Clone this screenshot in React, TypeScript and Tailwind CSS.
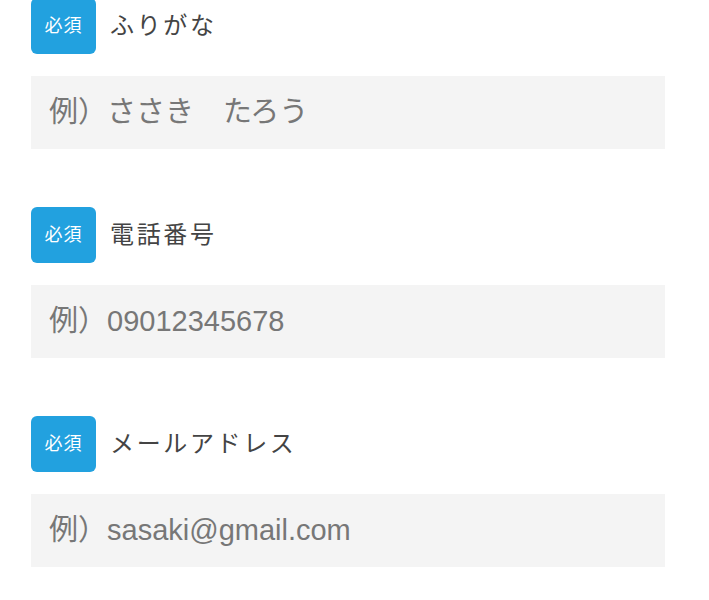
const fields = [
  { label: 'ふりがな', placeholder: '例）ささき　たろう', type: 'text' },
  { label: '電話番号', placeholder: '例）09012345678', type: 'tel' },
  { label: 'メールアドレス', placeholder: '例）sasaki@gmail.com', type: 'email' },
]

export default function App() {
  return (
    <div
      className="min-h-screen bg-white pl-[31px] pr-[44px] pt-0"
      style={{ fontFamily: '"Liberation Sans", "Noto Sans CJK JP", sans-serif' }}
    >
      <form className="flex flex-col gap-[58px] -mt-[2px]">
        {fields.map((f) => (
          <div key={f.label} className="flex flex-col gap-[22px]">
            <div className="flex items-center gap-[14px]">
              <span className="flex h-[56px] w-[65px] items-center justify-center rounded-md bg-[#22a1df] text-[18px] tracking-[0.05em] text-white">
                必須
              </span>
              <span className="text-[24px] tracking-[0.11em] text-[#444]">{f.label}</span>
            </div>
            <input
              type={f.type}
              placeholder={f.placeholder}
              className="h-[73px] w-full bg-[#f4f4f4] pl-[18px] text-[29px] text-[#555] outline-none placeholder:text-[#777]"
            />
          </div>
        ))}
      </form>
    </div>
  )
}
